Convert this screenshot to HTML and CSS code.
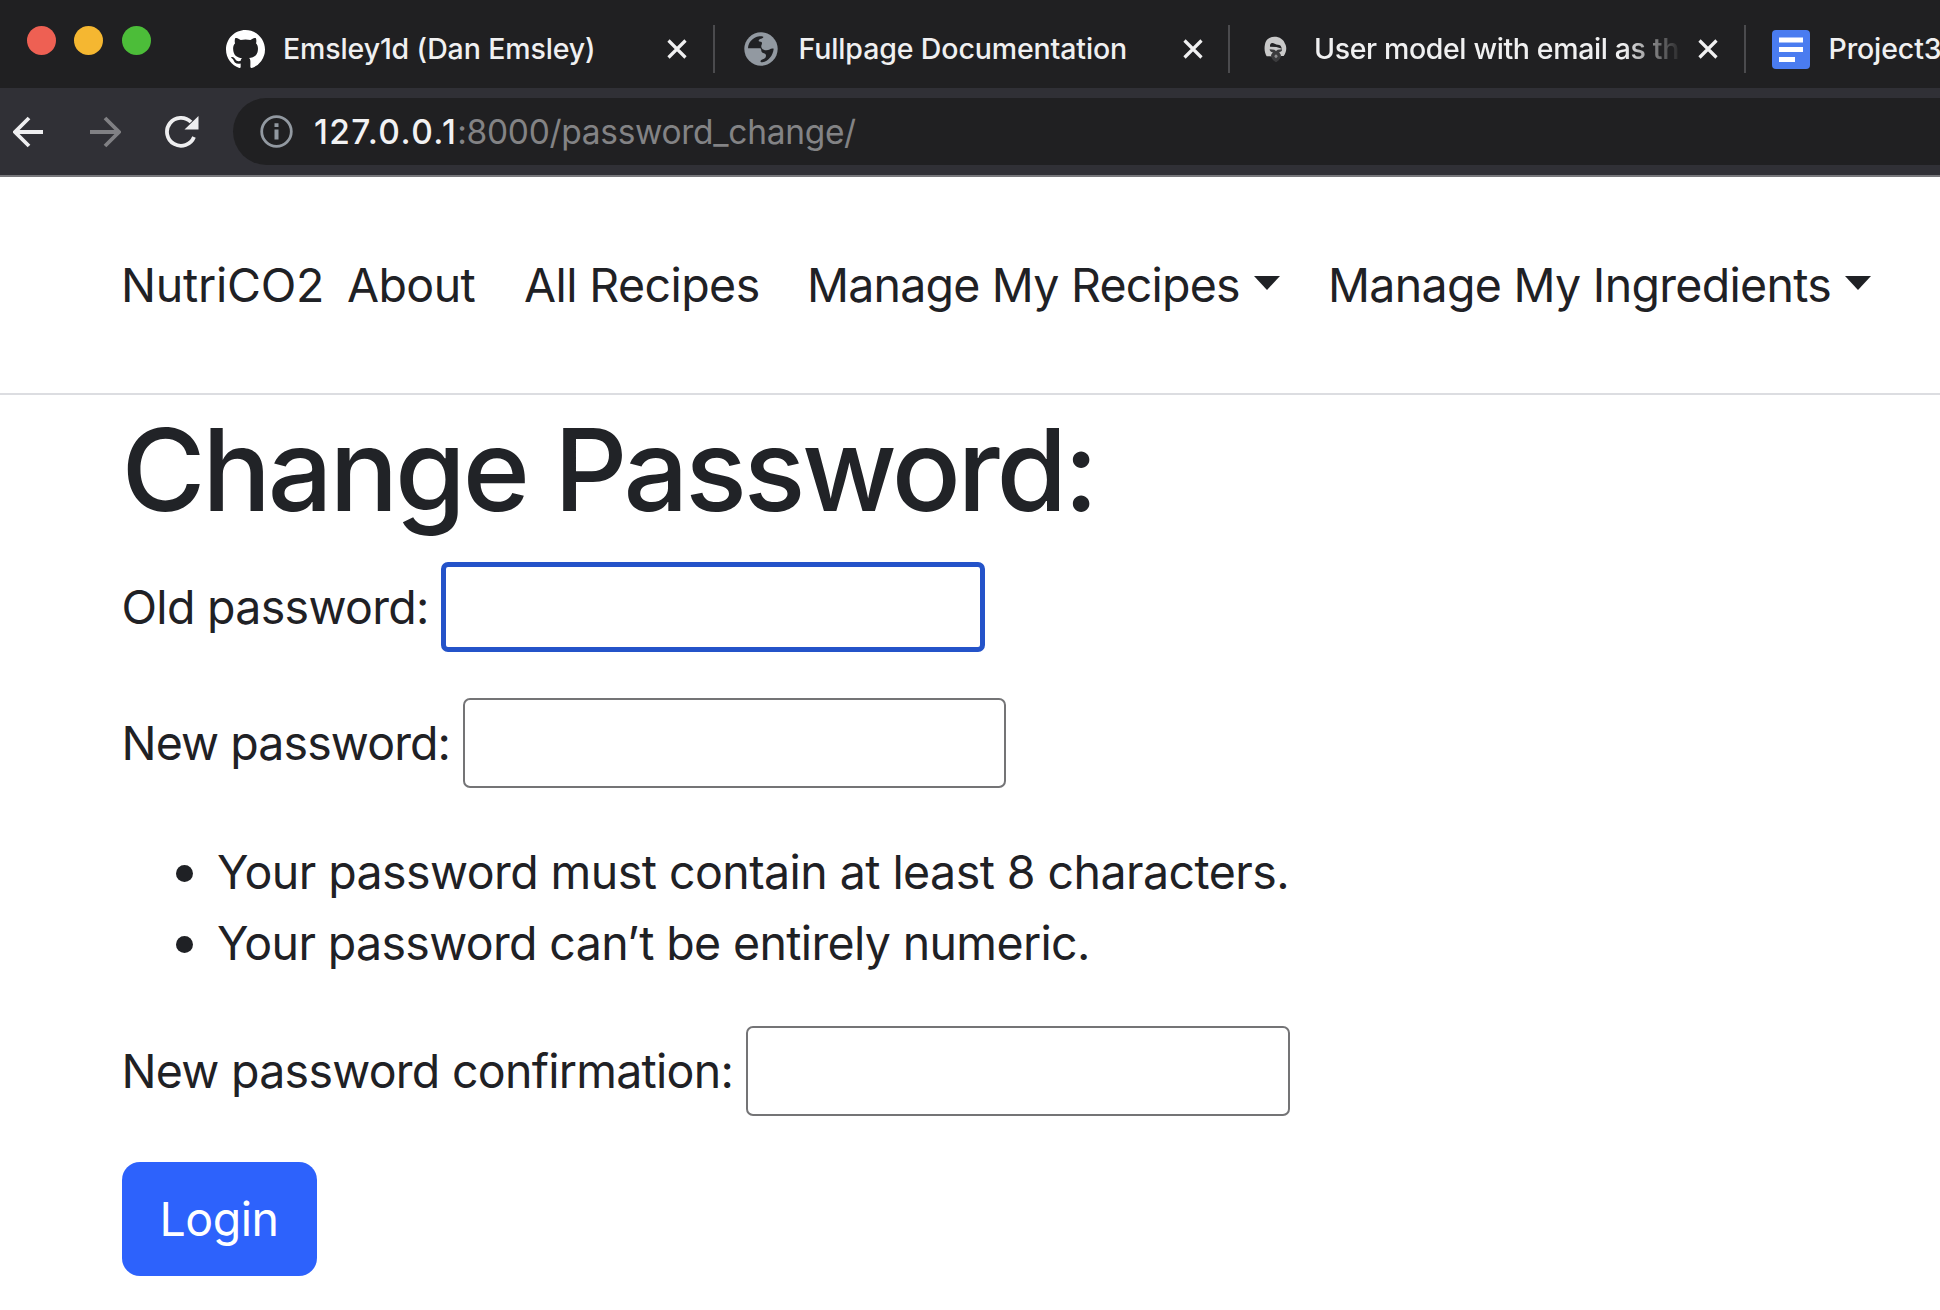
FILE: index.html
```html
<!DOCTYPE html>
<html lang="en">
<head>
<meta charset="utf-8">
<title>Change Password</title>
<link rel="stylesheet" href="styles.css">
</head>
<body>
<header class="browser">
  <div class="tabstrip">
    <div class="lights"><span class="light red"></span><span class="light amber"></span><span class="light green"></span></div>
    <div class="tab">
      <span class="favicon"><svg width="39" height="39" viewBox="0 0 16 16"><path fill="#fff" d="M8 0C3.58 0 0 3.58 0 8c0 3.54 2.29 6.53 5.47 7.59.4.07.55-.17.55-.38 0-.19-.01-.82-.01-1.49-2.01.37-2.53-.49-2.69-.94-.09-.23-.48-.94-.82-1.13-.28-.15-.68-.52-.01-.53.63-.01 1.08.58 1.23.82.72 1.21 1.87.87 2.33.66.07-.52.28-.87.51-1.07-1.78-.2-3.64-.89-3.64-3.95 0-.87.31-1.59.82-2.15-.08-.2-.36-1.02.08-2.12 0 0 .67-.21 2.2.82.64-.18 1.32-.27 2-.27s1.36.09 2 .27c1.53-1.04 2.2-.82 2.2-.82.44 1.1.16 1.92.08 2.12.51.56.82 1.27.82 2.15 0 3.07-1.87 3.75-3.65 3.95.29.25.54.73.54 1.48 0 1.07-.01 1.93-.01 2.2 0 .21.15.46.55.38A8.01 8.01 0 0 0 16 8c0-4.42-3.58-8-8-8z"/></svg></span>
      <span class="title t1">Emsley1d (Dan Emsley)</span>
      <svg class="close" width="22" height="22" viewBox="0 0 22 22"><path d="M2.500 2.500l17 17M19.500 2.500l-17 17"/></svg>
    </div>
    <div class="tab">
      <span class="favicon"><svg width="34" height="34" viewBox="41 63 102 102"><circle cx="92" cy="114" r="50" fill="#9299a1"/><path fill="#202124" d="M53 112c1-18 14-33 34-36 6-1 12 0 12 2 0 6-14 4-14 11 0 4 10 1 10 7 0 5-3 7-2 12 1 6 7 10 15 10 10 0 12-7 22-5-2 20-15 37-34 41-7 1-7-6-2-8 7-2 13-5 13-12 0-7-8-6-12-10-4-4 0-12-7-12z"/></svg></span>
      <span class="title t2">Fullpage Documentation</span>
      <svg class="close" width="22" height="22" viewBox="0 0 22 22"><path d="M2.500 2.500l17 17M19.500 2.500l-17 17"/></svg>
    </div>
    <div class="tab">
      <span class="favicon"><svg width="24" height="28" viewBox="43 42 72 84"><path fill="#c9c9c9" d="M46 70c2-14 13-23 28-23 16 0 28 8 32 21 6 10 5 26-4 37H95L79 110 62 106H51c-6-10-8-24-5-36z"/><path fill="#242426" d="M61 72c3-8 9-7 14-4 7 4 13 1 18 6l4 9-17-5-19-1z"/><path fill="#3b3b3d" d="M60 85l14 1 5 4 5-4 13-1c1 5-3 8-7 8l-1 2c8 6 7 19-10 29-17-10-18-23-10-29l-1-2c-5 0-8-3-8-8z"/><path fill="#8a8a8c" d="M76 101h6l2 6-5 5-5-5z"/></svg></span>
      <span class="title t3">User model with email as th</span>
      <svg class="close" width="22" height="22" viewBox="0 0 22 22"><path d="M2.500 2.500l17 17M19.500 2.500l-17 17"/></svg>
    </div>
    <div class="tab last">
      <span class="favicon"><svg width="38" height="39" viewBox="0 0 38 39"><rect width="38" height="39" rx="4" fill="#4a7cf0"/><path fill="#fff" d="M7 7.500h24v5H7zM7 17h24v5H7zM7 27h16v5H7z"/></svg></span>
      <span class="title t4">Project3</span>
    </div>
  </div>
  <div class="toolbar">
    <svg class="tool" width="32" height="32" viewBox="0 0 32 32"><path d="M30 16H2.500M16 2L2 16l14 14"/></svg>
    <svg class="tool dim" width="32" height="32" viewBox="0 0 32 32"><path d="M1 16h28.500M16 2l14 14-14 14"/></svg>
    <svg class="tool reload" width="34" height="34" viewBox="0 0 34 34"><path d="M29 22A14 14 0 1 1 26 7"/><path class="tip" d="M33.500 1v13.500H19.500z"/></svg>
    <div class="address">
      <svg width="33" height="33" viewBox="0 0 33 33"><circle cx="16.500" cy="16.500" r="14.800" fill="none" stroke="#9299a1" stroke-width="2.800"/><path fill="#9299a1" d="M14.500 8.300h4v3.700h-4zM14.500 14.500h4v10h-4z"/></svg>
      <span class="host">127.0.0.1</span><span class="path">:8000/password_change/</span>
    </div>
  </div>
</header>
<nav class="navbar">
  <a class="brand">NutriCO2</a>
  <a class="link about">About</a>
  <a class="link recipes">All Recipes</a>
  <a class="link manage">Manage My Recipes<span class="caret"></span></a>
  <a class="link ingredients">Manage My Ingredients<span class="caret"></span></a>
</nav>
<main class="content">
  <h1 class="heading">Change Password:</h1>
  <form>
    <div class="row"><label class="label old" for="old">Old password:</label><input class="field active" id="old" type="password"></div>
    <div class="row"><label class="label new" for="new">New password:</label><input class="field" id="new" type="password"></div>
    <ul class="rules">
      <li class="rule">Your password must contain at least 8 characters.</li>
      <li class="rule numeric">Your password can’t be entirely numeric.</li>
    </ul>
    <div class="row"><label class="label confirm" for="confirm">New password confirmation:</label><input class="field" id="confirm" type="password"></div>
    <button class="login" type="button">Login</button>
  </form>
</main>
</body>
</html>
```
FILE: styles.css
```css
* { box-sizing: border-box; }
body {
  margin: 0;
  height: 1310px;
  overflow: hidden;
  background: #fff;
  color: #1f2125;
  font: 46.5px/72px Inter, "Liberation Sans", sans-serif;
}
svg { flex: none; display: block; }

.browser { height: 177px; background: #303036; border-bottom: 2px solid #77777b; }
.tabstrip { display: flex; height: 88px; background: #202022; }
.lights { display: flex; flex: none; gap: 18.500px; width: 199px; padding: 25.500px 0 0 26.500px; }
.light { width: 29px; height: 29px; border-radius: 50%; }
.red { background: #ee6053; }
.amber { background: #f5b731; }
.green { background: #4cbd39; }

.tab {
  display: flex;
  flex: none;
  align-items: center;
  width: 515.500px;
  height: 48px;
  margin-top: 25px;
  padding-left: 26px;
  border-right: 2px solid #4b4b4e;
}
.last { flex: 1; width: auto; min-width: 0; padding-left: 25px; border-right: 0; overflow: hidden; }
.favicon { display: flex; flex: none; justify-content: center; width: 40px; }
.title {
  flex: none;
  width: 366px;
  margin-left: 18px;
  overflow: hidden;
  white-space: nowrap;
  color: #f0f0f1;
  font-size: 28.500px;
  font-weight: 500;
  line-height: 40px;
  letter-spacing: -0.12px;
}
.t3 {
  width: 376px;
  margin-right: -10px;
  letter-spacing: -0.37px;
  -webkit-mask-image: linear-gradient(90deg, #000 310px, transparent 368px);
  mask-image: linear-gradient(90deg, #000 310px, transparent 368px);
}
.t4 { flex: 1; width: auto; min-width: 0; }
.close { margin-left: 17px; fill: none; stroke: #f0f0f1; stroke-width: 3.200; }

.toolbar { display: flex; align-items: center; height: 87px; }
.tool { margin-left: 13px; fill: none; stroke: #eeeef0; stroke-width: 3.800; }
.dim { margin-left: 44px; stroke: #808084; }
.reload { margin-left: 44px; }
.tip { fill: #eeeef0; stroke: none; }
.address {
  display: flex;
  flex: 1;
  align-items: center;
  height: 67px;
  margin-left: 34px;
  padding-left: 27px;
  border-radius: 34px 0 0 34px;
  background: #202022;
  font-size: 33.500px;
  line-height: 50px;
}
.host { margin-left: 21px; color: #f2f2f3; font-weight: 500; letter-spacing: 1.4px; }
.path { color: #838385; letter-spacing: -0.3px; }

.navbar {
  display: flex;
  align-items: center;
  height: 218px;
  padding-left: 121px;
  border-bottom: 2px solid #dcdde1;
  white-space: nowrap;
}
.brand { width: 226px; letter-spacing: -0.25px; }
.link { display: flex; align-items: center; flex: none; }
.about { width: 177px; letter-spacing: -0.6px; }
.recipes { width: 283px; letter-spacing: -0.58px; }
.manage { width: 521px; letter-spacing: -0.79px; }
.ingredients { letter-spacing: -0.7px; }
.caret {
  margin: -4px 0 0 14px;
  border-top: 14px solid #1f2125;
  border-left: 13.500px solid transparent;
  border-right: 13.500px solid transparent;
}

.content { padding: 2.500px 0 0 121.500px; }
.heading {
  margin: 0 0 20px;
  color: #212327;
  font-size: 114.500px;
  font-weight: 500;
  line-height: 144px;
  letter-spacing: -3.3px;
}
.row { display: flex; align-items: center; height: 90px; margin-bottom: 46.500px; }
.label { flex: none; white-space: nowrap; }
.old { width: 319.500px; letter-spacing: -0.69px; }
.new { width: 341px; letter-spacing: -0.9px; }
.confirm { width: 624.500px; letter-spacing: -0.73px; }
.field {
  width: 543.500px;
  height: 90px;
  margin: 0;
  border: 2px solid #747476;
  border-radius: 7px;
  background: #fff;
  font-size: 40px;
}
.active { border: 5px solid #2453c9; outline: none; }
.rules { margin: 0 0 46px; padding: 2px 0 0 54px; list-style: none; }
.rule { display: flex; align-items: center; gap: 24.500px; line-height: 71.500px; letter-spacing: -0.56px; }
.rule::before { content: ""; flex: none; width: 17px; height: 17px; margin-top: 2px; border-radius: 50%; background: #1f2125; }
.numeric { letter-spacing: -0.65px; }
.login {
  display: block;
  width: 195px;
  height: 114px;
  padding: 0;
  border: 0;
  border-radius: 18px;
  background: #2d62fc;
  color: #fff;
  font: inherit;
  letter-spacing: -0.5px;
}
```
